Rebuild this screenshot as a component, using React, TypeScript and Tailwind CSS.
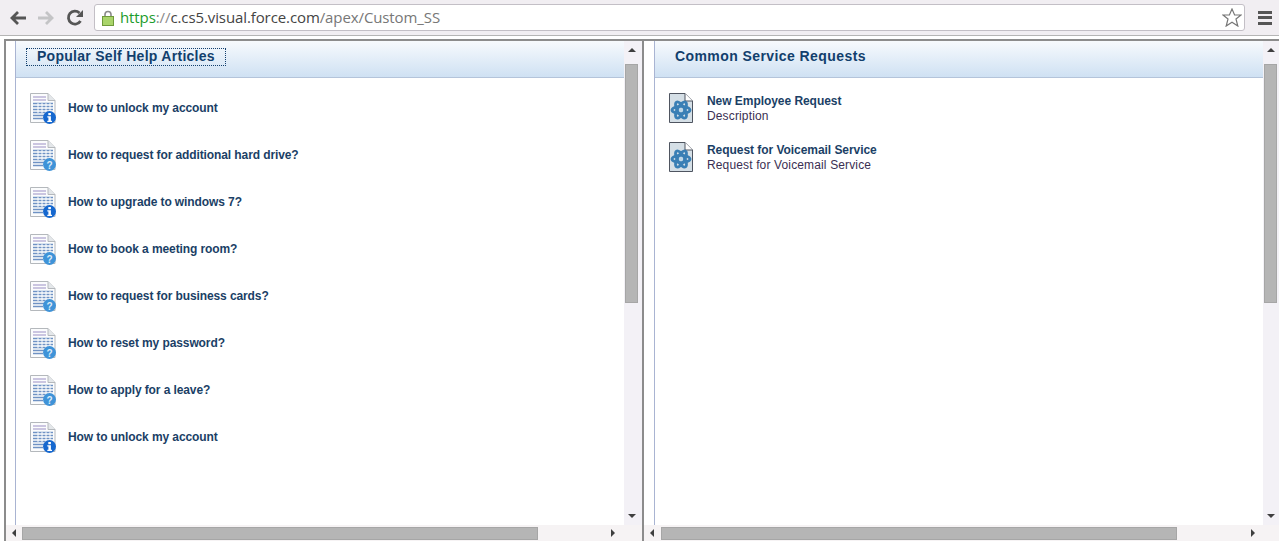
import { ReactNode } from "react";

type Article = { title: string; kind: "info" | "help" };

const articles: Article[] = [
  { title: "How to unlock my account", kind: "info" },
  { title: "How to request for additional hard drive?", kind: "help" },
  { title: "How to upgrade to windows 7?", kind: "info" },
  { title: "How to book a meeting room?", kind: "help" },
  { title: "How to request for business cards?", kind: "help" },
  { title: "How to reset my password?", kind: "help" },
  { title: "How to apply for a leave?", kind: "help" },
  { title: "How to unlock my account", kind: "info" },
];

const requests = [
  { title: "New Employee Request", desc: "Description" },
  { title: "Request for Voicemail Service", desc: "Request for Voicemail Service" },
];

const ArticleIcon = ({ kind }: { kind: Article["kind"] }) => (
  <svg width="28" height="32" viewBox="0 0 28 32" className="shrink-0">
    <path d="M1.500 1.500H19L26 8.500V30.500H1.500Z" fill="#fbfcfd" stroke="#b4b8bc" />
    <path d="M19 1.500V8.500H26" fill="#e4e7ea" stroke="#b4b8bc" />
    <path d="M4 5H17M4 8H17" stroke="#9a8fc4" strokeWidth="1" />
    <path d="M4 11.500H24M4 14.500H24M4 17.500H24M4 20.500H19M4 23.500H15M4 26.500H14" stroke="#6f92c4" strokeWidth="1.500" />
    <path d="M9 11V21M13 11V21M17 11V21M21 11V21" stroke="#ffffff" strokeWidth="1" />
    {kind === "info" ? (
      <>
        <circle cx="20.500" cy="25.500" r="6.500" fill="#1668cf" />
        <rect x="19.300" y="21" width="2.600" height="2.200" fill="#ffffff" />
        <path d="M18.300 24.300H21.900V28.800H23V30H18.300V28.800H19.400V25.500H18.300Z" fill="#ffffff" />
      </>
    ) : (
      <>
        <circle cx="20.500" cy="25.500" r="6.500" fill="#3f93d8" />
        <text
          x="20.500"
          y="29.500"
          textAnchor="middle"
          fontSize="10"
          fontWeight="700"
          fontFamily="Liberation Sans, sans-serif"
          fill="#dcecf8"
        >
          ?
        </text>
      </>
    )}
  </svg>
);

const RequestIcon = () => (
  <svg width="26" height="31" viewBox="0 0 26 31" className="shrink-0">
    <path d="M1.500 0.500H17L24.500 8V29.500H1.500Z" fill="#d5dfe6" stroke="#4f5560" />
    <path d="M17 0.500V8H24.500" fill="#ffffff" stroke="#4f5560" />
    <g fill="none" stroke="#3a7fb5" strokeWidth="2.800">
      <ellipse cx="13" cy="17" rx="9" ry="3.600" />
      <ellipse cx="13" cy="17" rx="9" ry="3.600" transform="rotate(60 13 17)" />
      <ellipse cx="13" cy="17" rx="9" ry="3.600" transform="rotate(120 13 17)" />
    </g>
    <circle cx="13" cy="17" r="2" fill="#bcd6e8" />
  </svg>
);

const Arrow = ({ dir }: { dir: "up" | "down" | "left" | "right" }) => {
  const points = {
    up: "0,5 4,1 8,5",
    down: "0,1 8,1 4,5",
    left: "6,0 6,8 2,4",
    right: "2,0 2,8 6,4",
  };
  const wide = dir === "up" || dir === "down";
  return (
    <svg width="8" height={wide ? 6 : 8} className="shrink-0">
      <polygon points={points[dir]} fill="#3f3f3f" />
    </svg>
  );
};

const Pane = ({
  title,
  focused,
  children,
  widthClass,
  gutterClass,
  scrollClass,
  thumbClass,
  spacerClass,
}: {
  title: string;
  focused?: boolean;
  children: ReactNode;
  widthClass: string;
  gutterClass: string;
  scrollClass: string;
  thumbClass: string;
  spacerClass: string;
}) => (
  <div className={`flex flex-col border-l-2 border-[#8c8c8c] ${widthClass}`}>
    <div className="flex min-h-0 flex-1">
      <div className={`shrink-0 bg-white ${gutterClass}`} />
      <div className="flex min-w-0 flex-1 flex-col border-l border-[#a9b4d2] bg-white">
        <div className="flex h-[37px] shrink-0 items-center border-b border-[#b4c4da] bg-gradient-to-b from-[#f7fafd] to-[#cfe1f3] pb-[5px] pl-[10px]">
          <div
            className={`flex h-[18px] items-center border border-dotted px-[10px] text-[14px] font-bold text-[#123f6d] ${
              focused ? "border-[#123f6d] tracking-[0.28px]" : "-ml-[1px] border-transparent tracking-[0.42px]"
            }`}
          >
            {title}
          </div>
        </div>
        <div className="min-h-0 flex-1">{children}</div>
      </div>
      <div className={`flex shrink-0 flex-col bg-[#f3f1f6] ${scrollClass}`}>
        <div className="flex w-[15px] flex-1 flex-col items-center pt-[6px]">
          <Arrow dir="up" />
          <div className="mt-[11px] h-[239px] w-[13px] shrink-0 border border-[#a6a6a6] bg-[#b5b5b5]" />
          <div className="flex-1" />
          <div className="mb-[6px]">
            <Arrow dir="down" />
          </div>
        </div>
      </div>
    </div>
    <div className="flex h-[16px] shrink-0 items-center bg-[#f6f3f4] pl-[4px]">
      <Arrow dir="left" />
      <div className={`h-[13px] border border-[#a6a6a6] bg-[#b5b5b5] ${thumbClass}`} />
      <div className={spacerClass} />
      <Arrow dir="right" />
    </div>
  </div>
);

export default function App() {
  return (
    <div
      className="flex h-[541px] w-[1279px] flex-col overflow-hidden bg-white text-[12px] text-[#1b3f66]"
      style={{ fontFamily: '"Liberation Sans", Arial, sans-serif' }}
    >
      {/* Browser toolbar */}
      <div className="flex h-[36px] shrink-0 items-center border-b border-[#b5b5b5] bg-[#f1eef2] pl-[9px] pr-[7px]">
        <svg width="17" height="16" viewBox="0 0 17 16" fill="none" stroke="#555555" strokeWidth="2.800">
          <path d="M17 8H3M9 2L3 8L9 14" />
        </svg>
        <svg width="18" height="16" viewBox="0 0 18 16" fill="none" stroke="#c4c4c6" strokeWidth="2.800" className="ml-[11px]">
          <path d="M1 8H15M9 2L15 8L9 14" />
        </svg>
        <svg width="18" height="18" viewBox="0 0 18 18" fill="none" className="ml-[11px]">
          <path d="M14.500 12A6.500 6.500 0 1 1 13.500 4" stroke="#555555" strokeWidth="2.800" />
          <path d="M17 1V8H10Z" fill="#555555" />
        </svg>
        <div className="ml-[10px] flex h-[27px] flex-1 items-center rounded-[3px] border border-[#c3bfc6] bg-white pl-[7px] pr-[2px] font-['Open_Sans',sans-serif] text-[15px] text-[#777777]">
          <svg width="12" height="16" viewBox="0 0 12 16" className="shrink-0">
            <path d="M3 7V4.500A3 3 0 0 1 9 4.500V7" fill="none" stroke="#8a8a8a" strokeWidth="1.600" />
            <rect x="0.500" y="6.500" width="11" height="9" fill="#a9d46a" stroke="#6f9a3a" />
          </svg>
          <span className="ml-[6px] whitespace-nowrap tracking-[-0.1px]">
            <span className="text-[#1c9c2c]">https</span>
            <span className="text-[#8a8a8a]">://</span>
            <span className="text-[#444444]">c.cs5.visual.force.com</span>
            /apex/Custom_SS
          </span>
          <svg width="20" height="19" viewBox="0 0 20 19" className="ml-auto" fill="#ffffff" stroke="#777777" strokeWidth="1.200">
            <path d="M10 1L12.600 7H19L14 11L15.800 18L10 14.200L4.200 18L6 11L1 7H7.400Z" />
          </svg>
        </div>
        <div className="ml-[13px] flex w-[14px] flex-col gap-[2.500px]">
          <div className="h-[3px] bg-[#555555]" />
          <div className="h-[3px] bg-[#555555]" />
          <div className="h-[3px] bg-[#555555]" />
        </div>
      </div>

      {/* Two panes */}
      <div className="flex min-h-0 flex-1 flex-col bg-white pl-[4px] pt-[3px]">
        <div className="flex min-h-0 flex-1 border-t-2 border-[#8c8c8c]">
          <Pane
            title="Popular Self Help Articles"
            focused
            widthClass="w-[638px]"
            gutterClass="w-[9px]"
            scrollClass="w-[18px]"
            thumbClass="ml-[4px] w-[516px]"
            spacerClass="w-[71px]"
          >
            <div className="flex flex-col gap-[15px] pl-[13px] pt-[14px]">
              {articles.map((article, i) => (
                <div key={i} className="flex h-[32px] items-center gap-[11px] font-bold tracking-[-0.1px]">
                  <ArticleIcon kind={article.kind} />
                  <span>{article.title}</span>
                </div>
              ))}
            </div>
          </Pane>
          <Pane
            title="Common Service Requests"
            widthClass="flex-1"
            gutterClass="w-[10px]"
            scrollClass="w-[16px]"
            thumbClass="ml-[5px] w-[516px]"
            spacerClass="w-[72px]"
          >
            <div className="flex flex-col gap-[18px] pl-[13px] pt-[15px]">
              {requests.map((req) => (
                <div key={req.title} className="flex h-[31px] items-center gap-[13px]">
                  <RequestIcon />
                  <div className="leading-[15px]">
                    <div className="font-bold tracking-[-0.05px]">{req.title}</div>
                    <div className="tracking-[0.14px] text-[#3a2f52]">{req.desc}</div>
                  </div>
                </div>
              ))}
            </div>
          </Pane>
        </div>
      </div>
    </div>
  );
}
